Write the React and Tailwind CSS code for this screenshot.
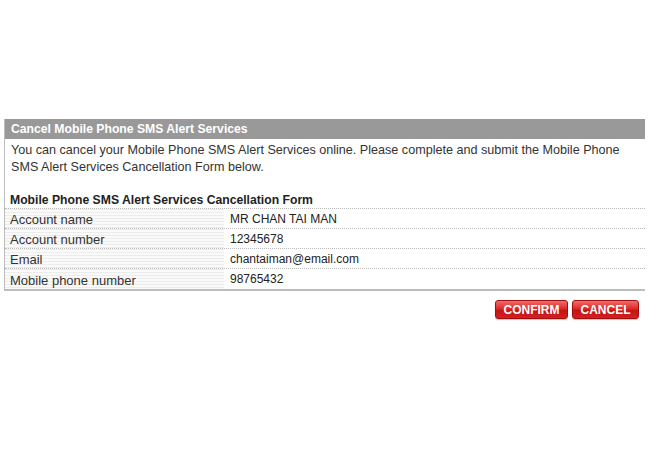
const ROWS = [
  { label: 'Account name', value: 'MR CHAN TAI MAN' },
  { label: 'Account number', value: '12345678' },
  { label: 'Email', value: 'chantaiman@email.com' },
  { label: 'Mobile phone number', value: '98765432' },
];

function RedButton({ children, className }) {
  return (
    <button
      className={
        'h-[19px] rounded-[3px] border border-[#9e1010] bg-[linear-gradient(to_bottom,#f26a6a_0%,#e02a2a_45%,#c41414_55%,#d42020_100%)] text-[12px] font-bold leading-none text-white shadow-[0_1px_1px_rgba(0,0,0,0.25)] ' +
        className
      }
    >
      {children}
    </button>
  );
}

export default function App() {
  return (
    <div className="min-h-[462px] w-[650px] bg-white pt-[119px] pl-[4px] pr-[5px] font-['Liberation_Sans',Arial,sans-serif] text-[12px] text-[#333]">
      {/* Panel */}
      <div className="border-b-2 border-l border-[#bdbdbd]">
        <div className="flex h-[20px] items-center bg-[#999] pl-[6px] text-[12.2px] font-bold text-white">
          Cancel Mobile Phone SMS Alert Services
        </div>

        <p className="pl-[6px] pt-[3px] text-[12.6px] leading-[17px]">
          You can cancel your Mobile Phone SMS Alert Services online. Please complete and submit the Mobile Phone
          SMS Alert Services Cancellation Form below.
        </p>

        <h2 className="mt-[17px] pl-[5px] text-[12.2px] font-bold leading-[15px] text-[#222]">
          Mobile Phone SMS Alert Services Cancellation Form
        </h2>

        {/* Form rows */}
        <div className="border-t border-dotted border-[#bbb]">
          {ROWS.map((row, i) => (
            <div
              key={row.label}
              className={
                'flex h-[20px] ' +
                (i < ROWS.length - 1 ? 'border-b border-dotted border-[#bbb]' : '')
              }
            >
              <div className="flex w-[219px] items-end bg-[repeating-linear-gradient(to_bottom,#ececec_0px,#ececec_1px,#fafafa_1px,#fafafa_3px)] pl-[5px] text-[13px] leading-[17px] text-[#333]">
                {row.label}
              </div>
              <div className="flex items-center pl-[6px] text-[#222]">{row.value}</div>
            </div>
          ))}
        </div>
      </div>

      {/* Actions */}
      <div className="mt-[9px] flex justify-end gap-[4px] pr-[6px]">
        <RedButton className="w-[73px]">CONFIRM</RedButton>
        <RedButton className="w-[67px]">CANCEL</RedButton>
      </div>
    </div>
  );
}
